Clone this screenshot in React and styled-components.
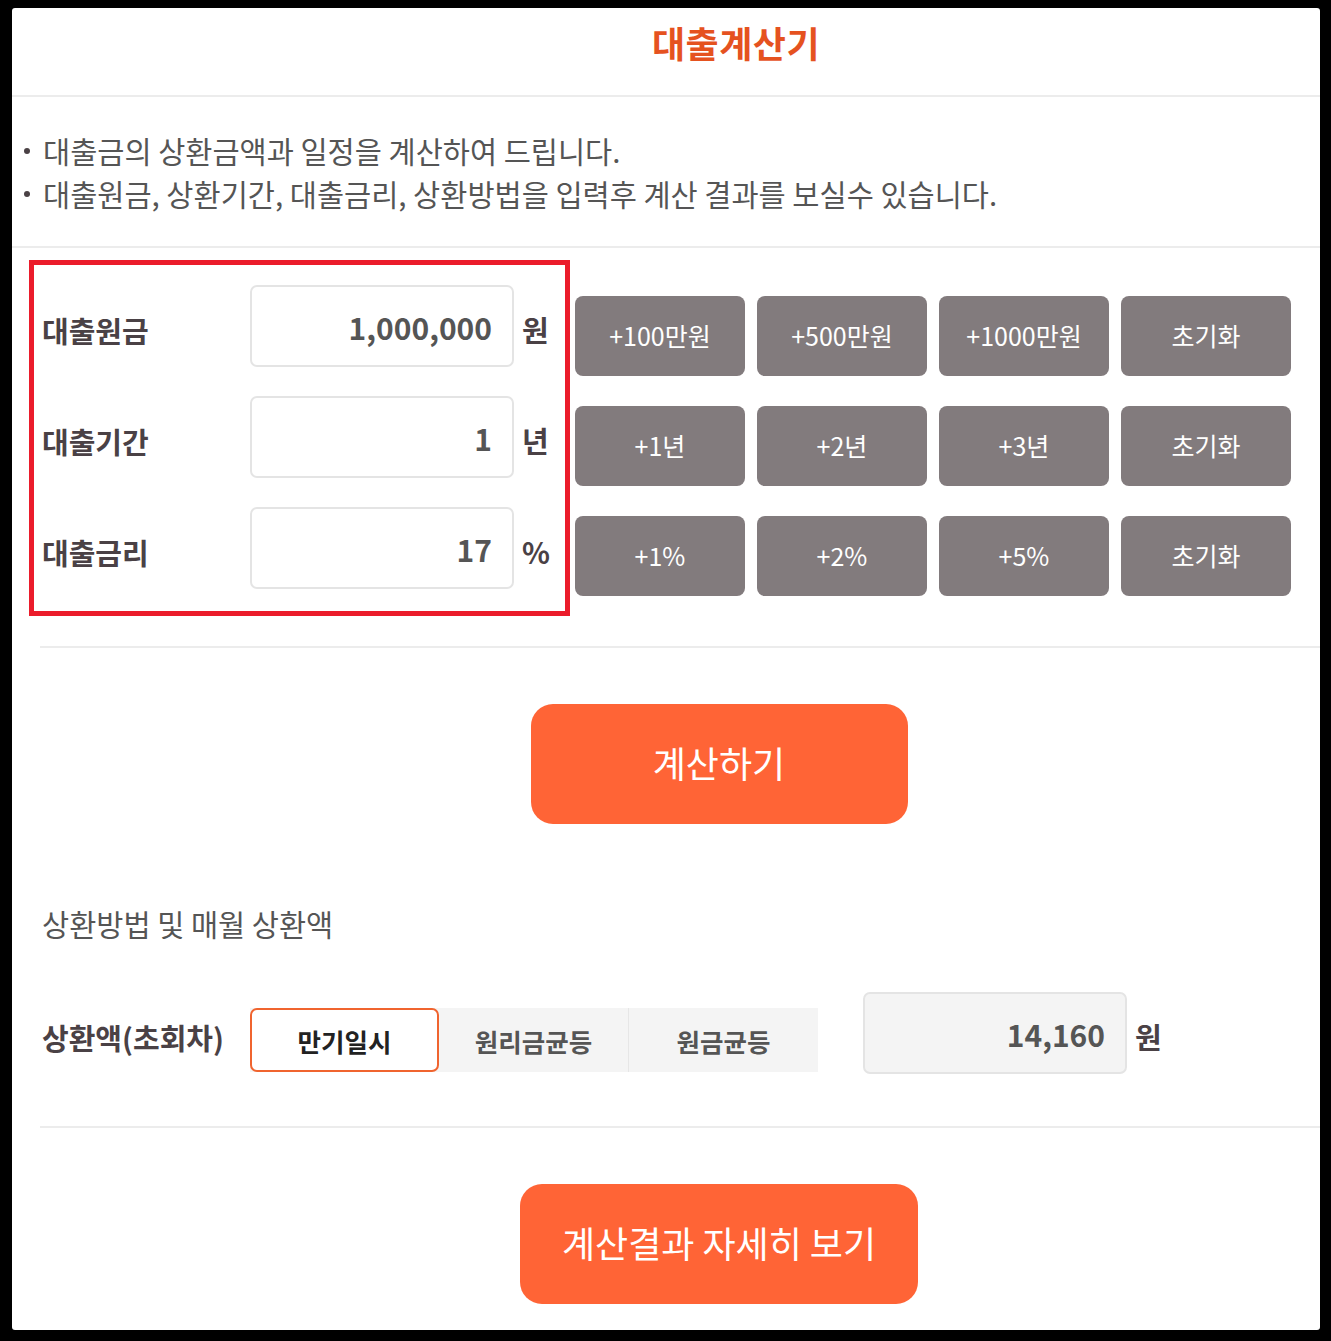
import React, { useState } from 'react';
import styled, { createGlobalStyle } from 'styled-components';

const GlobalStyle = createGlobalStyle`
  html, body {
    margin: 0;
    padding: 0;
    background: #000;
  }
  body {
    font-family: "Noto Sans CJK KR", "Noto Sans", sans-serif;
  }
  * { box-sizing: border-box; }
`;

const Page = styled.div`
  padding: 8px 11px 11px 12px;
`;

const Card = styled.div`
  width: 1308px;
  height: 1322px;
  background: #fff;
  border-radius: 3px;
  overflow: hidden;
`;

const Header = styled.div`
  height: 89px;
  padding: 0 0 19px 140px;
  display: flex;
  align-items: center;
  justify-content: center;
  border-bottom: 2px solid #ececec;
`;

const Title = styled.h1`
  margin: 0;
  font-size: 36px;
  font-weight: 700;
  color: #e5521f;
  letter-spacing: 0.5px;
`;

const Notice = styled.ul`
  margin: 0;
  padding: 32px 0 31px 31px;
  list-style: none;
  border-bottom: 2px solid #ececec;
`;

const NoticeItem = styled.li`
  position: relative;
  font-size: 29.5px;
  line-height: 43px;
  color: #555;

  &::before {
    content: '';
    position: absolute;
    left: -19px;
    top: 19px;
    width: 6px;
    height: 6px;
    border-radius: 50%;
    background: #4a4145;
  }
`;

const InputSection = styled.section`
  display: flex;
  align-items: flex-start;
  padding: 12px 0 30px 17px;
`;

const Rule = styled.div`
  height: 2px;
  background: #ececec;
  margin-left: 28px;
`;

const Highlight = styled.div`
  width: 541px;
  border: 5px solid #eb1c2b;
  padding: 20px 0 22px 8px;
  display: flex;
  flex-direction: column;
  gap: 29px;
`;

const Field = styled.div`
  display: flex;
  align-items: center;
  height: 82px;
`;

const Label = styled.label`
  width: 208px;
  padding-top: 8px;
  font-size: 29px;
  font-weight: 700;
  color: #4a4145;
`;

const ValueBox = styled.div`
  width: 264px;
  height: 82px;
  border: 2px solid #e4e4e4;
  border-radius: 7px;
  background: ${p => (p.$readonly ? '#f4f4f4' : '#fff')};
  display: flex;
  align-items: center;
  justify-content: flex-end;
  padding: 2px 20px 0 0;
  font-size: 30px;
  font-weight: 700;
  color: #555;
`;

const Unit = styled.span`
  margin-left: 8px;
  padding-top: 6px;
  font-size: 29px;
  font-weight: 700;
  color: #4a4145;
`;

const ButtonGrid = styled.div`
  display: grid;
  grid-template-columns: repeat(4, 170px);
  grid-auto-rows: 80px;
  column-gap: 12px;
  row-gap: 30px;
  margin: 36px 0 0 5px;
`;

const StepButton = styled.button`
  border: none;
  border-radius: 8px;
  background: #827b7d;
  color: #fff;
  font-family: inherit;
  font-size: 25px;
  padding: 0 0 2px;
  cursor: pointer;
`;

const ActionWrap = styled.div`
  display: flex;
  justify-content: center;
  padding: ${p => p.$pad};
  padding-left: 106px;
`;

const PrimaryButton = styled.button`
  width: ${p => p.$w}px;
  height: 120px;
  border: none;
  border-radius: 22px;
  background: #ff6436;
  color: #fff;
  font-family: inherit;
  font-size: 36px;
  padding: 0 0 4px;
  cursor: pointer;
`;

const ResultSection = styled.section`
  padding: 0 0 52px 30px;
`;

const SubTitle = styled.h2`
  margin: 0 0 49px;
  font-size: 29.5px;
  line-height: 40px;
  font-weight: 400;
  color: #555;
`;

const ResultRow = styled.div`
  display: flex;
  align-items: center;
  height: 82px;
`;

const Tabs = styled.div`
  display: flex;
  align-self: flex-start;
  height: 64px;
  margin-top: 16px;
  background: #f4f4f4;
`;

const Tab = styled.button`
  width: ${p => p.$w}px;
  height: 64px;
  border: ${p => (p.$active ? '2px solid #f0642f' : 'none')};
  border-left: ${p => (p.$active ? '2px solid #f0642f' : p.$divider ? '1px solid #e6e6e6' : 'none')};
  border-radius: ${p => (p.$active ? '7px' : '0')};
  background: ${p => (p.$active ? '#fff' : 'transparent')};
  color: ${p => (p.$active ? '#222' : '#555')};
  font-family: inherit;
  font-size: 25.5px;
  font-weight: 700;
  padding: 0;
  cursor: pointer;
`;

const ResultValue = styled(ValueBox)`
  margin-left: 45px;
`;

const amountSteps = ['+100만원', '+500만원', '+1000만원', '초기화'];
const yearSteps = ['+1년', '+2년', '+3년', '초기화'];
const rateSteps = ['+1%', '+2%', '+5%', '초기화'];

const methods = [
  { name: '만기일시', w: 189 },
  { name: '원리금균등', w: 189 },
  { name: '원금균등', w: 190 },
];

const App = () => {
  const [method, setMethod] = useState(0);

  return (
    <Page>
      <GlobalStyle />
      <Card>
        <Header>
          <Title>대출계산기</Title>
        </Header>

        <Notice>
          <NoticeItem>대출금의 상환금액과 일정을 계산하여 드립니다.</NoticeItem>
          <NoticeItem>대출원금, 상환기간, 대출금리, 상환방법을 입력후 계산 결과를 보실수 있습니다.</NoticeItem>
        </Notice>

        <InputSection>
          <Highlight>
            <Field>
              <Label>대출원금</Label>
              <ValueBox>1,000,000</ValueBox>
              <Unit>원</Unit>
            </Field>
            <Field>
              <Label>대출기간</Label>
              <ValueBox>1</ValueBox>
              <Unit>년</Unit>
            </Field>
            <Field>
              <Label>대출금리</Label>
              <ValueBox>17</ValueBox>
              <Unit>%</Unit>
            </Field>
          </Highlight>
          <ButtonGrid>
            {[...amountSteps, ...yearSteps, ...rateSteps].map((t, i) => (
              <StepButton key={i}>{t}</StepButton>
            ))}
          </ButtonGrid>
        </InputSection>
        <Rule />

        <ActionWrap $pad="56px 0 79px">
          <PrimaryButton $w={377}>계산하기</PrimaryButton>
        </ActionWrap>

        <ResultSection>
          <SubTitle>상환방법 및 매월 상환액</SubTitle>
          <ResultRow>
            <Label>상환액(초회차)</Label>
            <Tabs>
              {methods.map((m, i) => (
                <Tab
                  key={m.name}
                  $w={m.w}
                  $active={method === i}
                  $divider={i === 2}
                  onClick={() => setMethod(i)}
                >
                  {m.name}
                </Tab>
              ))}
            </Tabs>
            <ResultValue $readonly>14,160</ResultValue>
            <Unit>원</Unit>
          </ResultRow>
        </ResultSection>
        <Rule />

        <ActionWrap $pad="56px 0 26px">
          <PrimaryButton $w={398}>계산결과 자세히 보기</PrimaryButton>
        </ActionWrap>
      </Card>
    </Page>
  );
};

export default App;
